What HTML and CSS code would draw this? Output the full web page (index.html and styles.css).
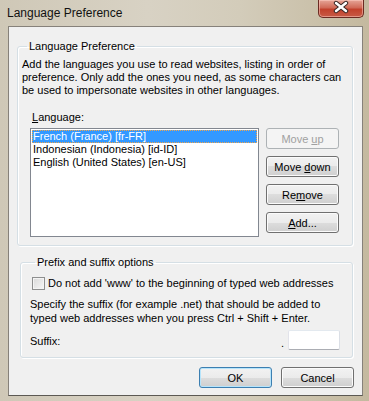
FILE: index.html
```html
<!DOCTYPE html>
<html lang="en">
<head>
    <meta charset="UTF-8">
    <title>Language Preference</title>
    <link rel="stylesheet" href="styles.css">
</head>
<body>

    <div class="window">
        <div class="titlebar">
            <span class="title">Language Preference</span>
            <div class="close-btn">
                <svg width="46" height="18" viewBox="0 0 46 18">
                    <line x1="18" y1="4" x2="28" y2="12" stroke="#3a2a28" stroke-width="4.4" stroke-linecap="round"/>
                    <line x1="28" y1="4" x2="18" y2="12" stroke="#3a2a28" stroke-width="4.4" stroke-linecap="round"/>
                    <line x1="18" y1="4" x2="28" y2="12" stroke="#ffffff" stroke-width="2.4" stroke-linecap="round"/>
                    <line x1="28" y1="4" x2="18" y2="12" stroke="#ffffff" stroke-width="2.4" stroke-linecap="round"/>
                </svg>
            </div>
        </div>

        <div class="client">
            <!-- Languages -->
            <fieldset class="group group-lang">
                <legend>Language Preference</legend>
                <p class="desc">Add the languages you use to read websites, listing in order of preference. Only add the ones you need, as some characters can be used to impersonate websites in other languages.</p>
                <div class="field-label"><u>L</u>anguage:</div>
                <div class="lang-row">
                    <div class="listbox">
                        <div class="item selected">French (France) [fr-FR]</div>
                        <div class="item">Indonesian (Indonesia) [id-ID]</div>
                        <div class="item">English (United States) [en-US]</div>
                    </div>
                    <div class="side-buttons">
                        <button class="btn" disabled>Move <u>u</u>p</button>
                        <button class="btn">Move <u>d</u>own</button>
                        <button class="btn">Re<u>m</u>ove</button>
                        <button class="btn"><u>A</u>dd...</button>
                    </div>
                </div>
            </fieldset>

            <!-- Prefix / suffix -->
            <fieldset class="group group-suffix">
                <legend>Prefix and suffix options</legend>
                <label class="check-row">
                    <span class="checkbox"></span>
                    <span>Do not add 'www' to the beginning of typed web addresses</span>
                </label>
                <p class="desc desc-suffix">Specify the suffix (for example .net) that should be added to typed web addresses when you press Ctrl + Shift + Enter.</p>
                <div class="suffix-row">
                    <span>Suffix:</span>
                    <span class="dot">.</span>
                    <input class="suffix-input" type="text">
                </div>
            </fieldset>

            <div class="dialog-buttons">
                <button class="btn btn-default">OK</button>
                <button class="btn">Cancel</button>
            </div>
        </div>
    </div>

</body>
</html>
```

FILE: styles.css
```css
body {
    margin: 0;
    font-family: "Liberation Sans", Arial, sans-serif;
    font-size: 11px;
    color: #000;
}

.window {
    width: 369px;
    height: 401px;
    box-sizing: border-box;
    background: linear-gradient(90deg, #cfc8b7 0%, #d8d2c4 40%, #d3ccba 65%, #c4b99f 100%);
    display: flex;
    flex-direction: column;
}

.titlebar {
    height: 26px;
    display: flex;
    justify-content: space-between;
    align-items: flex-start;
}

.title {
    font-size: 12px;
    line-height: 14px;
    margin: 6px 0 0 7px;
    color: #111;
}

.close-btn {
    width: 46px;
    height: 18px;
    margin-right: 5px;
    border: 1px solid #6b2a22;
    border-top: none;
    border-radius: 0 0 5px 5px;
    box-sizing: border-box;
    background: linear-gradient(#e6a597 0%, #d06a58 45%, #c2412c 55%, #c75a46 100%);
    box-shadow: inset 0 0 0 1px rgba(255, 210, 200, 0.5);
    overflow: hidden;
}

.close-btn svg {
    display: block;
    margin: -1px 0 0 -1px;
}

.client {
    flex: 1;
    margin: 0 6px 5px 8px;
    border: 1px solid #86817a;
    border-bottom-color: #5c5953;
    background: #f0f0f0;
    display: flex;
    flex-direction: column;
}

.group {
    border: 1px solid #d5dfe5;
    border-radius: 3px;
    box-shadow: inset 1px 1px 0 #fff, 1px 1px 0 #fff;
    padding: 0;
    min-width: 0;
}

.group legend {
    padding: 0 2px;
    line-height: 13px;
}

.group-lang {
    margin: 13px 9px 0 8px;
    padding: 5px 11px 8px 4px;
}

.group-lang .desc {
    margin-right: -8px;
}

.group-lang legend {
    margin-left: 5px;
}

.desc {
    margin: 0;
    line-height: 13px;
}

.field-label {
    margin: 14px 0 4px 10px;
    line-height: 13px;
}

.lang-row {
    display: flex;
    gap: 7px;
    margin-left: 8px;
}

.listbox {
    width: 229px;
    height: 109px;
    box-sizing: border-box;
    border: 1px solid #828790;
    background: #fff;
    padding: 1px;
}

.item {
    line-height: 13px;
    padding-left: 1px;
    white-space: nowrap;
}

.item.selected {
    background: #3399ff;
    color: #fff;
    outline: 1px dotted #f2a54a;
    outline-offset: -1px;
}

.side-buttons {
    display: flex;
    flex-direction: column;
    gap: 7px;
}

.btn {
    width: 73px;
    height: 21px;
    padding: 0;
    font-family: inherit;
    font-size: 11px;
    color: #000;
    border: 1px solid #707070;
    border-radius: 3px;
    background: linear-gradient(#f2f2f2 0%, #ebebeb 50%, #dddddd 50%, #cfcfcf 100%);
    box-shadow: inset 0 0 0 1px #fbfbfb;
}

.btn:disabled {
    color: #a0a0a0;
    border-color: #adb2b5;
    background: #f4f4f4;
    box-shadow: none;
}

.btn-default {
    border-color: #3c7fb1;
    box-shadow: inset 0 0 0 1px #b6e4fb;
}

.group-suffix {
    margin: 10px 9px 0 11px;
    padding: 8px 12px 7px 10px;
}

.group-suffix legend {
    margin-left: 4px;
}

.check-row {
    display: flex;
    align-items: center;
    gap: 3px;
    margin-left: 1px;
    line-height: 13px;
}

.checkbox {
    width: 13px;
    height: 13px;
    box-sizing: border-box;
    border: 1px solid #8e8f8f;
    background: linear-gradient(135deg, #d9d9d9 0%, #f7f7f7 100%);
    box-shadow: inset 0 0 0 1px #f4f4f4;
}

.desc-suffix {
    margin-top: 7px;
    margin-left: -1px;
    margin-right: -6px;
    line-height: 14px;
}

.suffix-row {
    display: flex;
    align-items: flex-end;
    margin-top: 5px;
    margin-left: -1px;
}

.suffix-row span:first-child {
    flex: 1;
    margin-bottom: 3px;
}

.dot {
    margin: 0 4px 1px 0;
}

.suffix-input {
    width: 52px;
    height: 20px;
    box-sizing: border-box;
    border: 1px solid #abadb3;
    border-top-color: #e3e9ef;
    border-left-color: #e2e3ea;
    border-right-color: #dbdfe6;
    border-radius: 2px;
    background: #fff;
    margin: 0;
}

.dialog-buttons {
    display: flex;
    justify-content: flex-end;
    gap: 9px;
    margin: 9px 8px 0 0;
}
```
